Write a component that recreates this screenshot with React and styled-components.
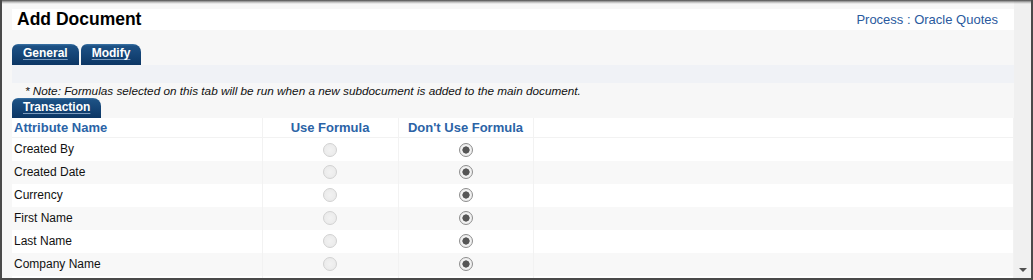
import React from 'react'
import styled, { createGlobalStyle } from 'styled-components'

const GlobalStyle = createGlobalStyle`
  body {
    margin: 0;
    font-family: "Liberation Sans", Arial, sans-serif;
  }
`

const attributes = [
  'Created By',
  'Created Date',
  'Currency',
  'First Name',
  'Last Name',
  'Company Name',
  '',
]

const App = () => {
  return (
    <>
      <GlobalStyle />
      <Frame>
        <Content>
          <Header>
            <Title>Add Document</Title>
            <ProcessLink>Process : Oracle Quotes</ProcessLink>
          </Header>

          <TabBar>
            <Tab>General</Tab>
            <Tab>Modify</Tab>
          </TabBar>
          <TabStrip />

          <Note>* Note: Formulas selected on this tab will be run when a new subdocument is added to the main document.</Note>
          <TabBar>
            <Tab $small>Transaction</Tab>
          </TabBar>

          <Table>
            <colgroup>
              <col style={{ width: 250 }} />
              <col style={{ width: 136 }} />
              <col style={{ width: 135 }} />
              <col />
            </colgroup>
            <thead>
              <tr>
                <HeadCell>Attribute Name</HeadCell>
                <HeadCell $center>Use Formula</HeadCell>
                <HeadCell $center>Don't Use Formula</HeadCell>
                <HeadCell />
              </tr>
            </thead>
            <tbody>
              {attributes.map((name, i) => (
                <Row key={i} $alt={i % 2 === 1}>
                  <Cell>{name}</Cell>
                  <Cell $center>{name && <Radio />}</Cell>
                  <Cell $center>{name && <Radio $checked />}</Cell>
                  <Cell />
                </Row>
              ))}
            </tbody>
          </Table>
        </Content>
        <Scrollbar>
          <ArrowDown />
        </Scrollbar>
      </Frame>
    </>
  )
}

export default App

const Frame = styled.div`
  position: relative;
  width: 1033px;
  height: 280px;
  box-sizing: border-box;
  border-left: 2px solid #4a4a4a;
  border-right: 2px solid #4a4a4a;
  border-bottom: 2px solid #4a4a4a;
  background: #f7f7f7;
  display: flex;
  overflow: hidden;

  &::before {
    content: '';
    position: absolute;
    top: 0;
    left: 0;
    right: 0;
    height: 4px;
    background: linear-gradient(#4a4a4a, rgba(120, 120, 120, 0.5) 50%, rgba(200, 200, 200, 0));
    z-index: 2;
  }
`

const Content = styled.div`
  flex: 1;
  min-width: 0;
  padding: 9px 0 0 10px;
  overflow: hidden;
`

const Header = styled.div`
  height: 21px;
  background: #fff;
  display: flex;
  align-items: center;
  justify-content: space-between;
  padding: 0 16px 0 5px;
  margin-bottom: 14px;
`

const Title = styled.div`
  font-size: 17.5px;
  font-weight: 700;
  color: #000;
`

const ProcessLink = styled.a`
  font-size: 13px;
  color: #2a5a9e;
  cursor: pointer;
`

const TabBar = styled.div`
  display: flex;
  gap: 2px;
`

const Tab = styled.div`
  height: ${p => (p.$small ? 20 : 21)}px;
  line-height: ${p => (p.$small ? 18 : 19)}px;
  padding: 0 11px;
  box-sizing: border-box;
  border-radius: 6px 8px 0 0;
  background: linear-gradient(#3c76a8 0, #1d5184 2px, #154577 50%, #0c3664 100%);
  color: #fff;
  font-size: 12px;
  font-weight: 700;
  text-decoration: underline;
  text-decoration-color: rgba(170, 195, 225, 0.7);
  text-underline-offset: 2px;
`

const TabStrip = styled.div`
  height: 18px;
  background: #f0f2f6;
`

const Note = styled.div`
  height: 15px;
  line-height: 15px;
  padding-left: 13px;
  font-size: 11.75px;
  font-style: italic;
  color: #111;
`

const Table = styled.table`
  width: 100%;
  table-layout: fixed;
  border-collapse: collapse;
  background: #fff;
`

const HeadCell = styled.th`
  height: 19px;
  padding: 0 2px;
  text-align: ${p => (p.$center ? 'center' : 'left')};
  font-size: 13px;
  font-weight: 700;
  color: #2b63a6;
  border-right: 1px solid #f2f2f2;
  border-bottom: 1px solid #f2f2f2;
  vertical-align: middle;
`

const Row = styled.tr`
  height: 23px;
  background: ${p => (p.$alt ? '#f8f8f8' : '#fff')};
`

const Cell = styled.td`
  padding: 0 2px;
  font-size: 12px;
  color: #111;
  text-align: ${p => (p.$center ? 'center' : 'left')};
  border-right: 1px solid #f2f2f2;
  vertical-align: middle;
`

const Radio = styled.span`
  display: inline-block;
  vertical-align: middle;
  width: 14px;
  height: 14px;
  box-sizing: border-box;
  border-radius: 50%;
  border: 1px solid ${p => (p.$checked ? '#8e8e8e' : '#d2d2d2')};
  background: ${p =>
    p.$checked
      ? 'radial-gradient(circle, #555 0, #555 3.3px, #f4f4f4 3.9px, #e2e2e2 100%)'
      : 'radial-gradient(circle, #f2f2f2 0, #e8e8e8 100%)'};
`

const Scrollbar = styled.div`
  width: 17px;
  background: #f0f0f0;
  display: flex;
  flex-direction: column;
  justify-content: flex-end;
  align-items: center;
  padding-bottom: 6px;
  box-sizing: border-box;
`

const ArrowDown = styled.div`
  width: 0;
  height: 0;
  border-left: 4px solid transparent;
  border-right: 4px solid transparent;
  border-top: 4px solid #505050;
`
